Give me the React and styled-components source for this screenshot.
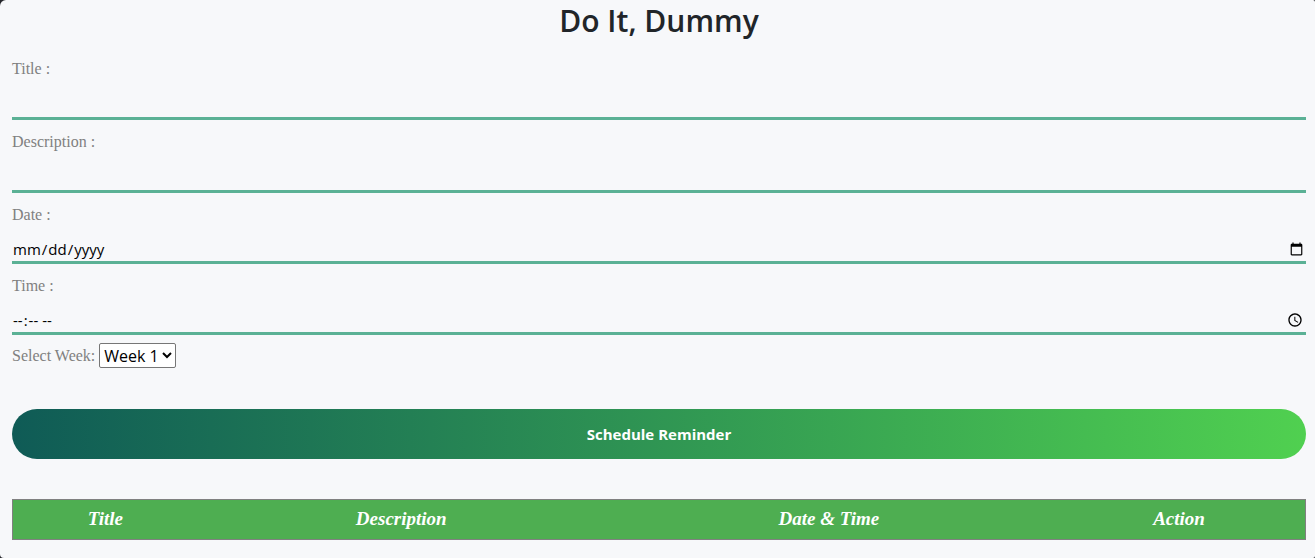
import React from "react";
import styled, { createGlobalStyle } from "styled-components";

const sans = `"Open Sans", "Noto Sans", sans-serif`;
const serif = `"Liberation Serif", "Times New Roman", serif`;

const GlobalStyle = createGlobalStyle`
  *, *::before, *::after { box-sizing: border-box; }
  body {
    margin: 0;
    background: #25262b;
    color: #212529;
    font-family: ${sans};
  }
`;

const Page = styled.main`
  min-height: 100vh;
  padding: 2px 9px 18px 12px;
  background: #f7f8fa;
  border-radius: 6px 2px 2px 4px;
`;

const Heading = styled.h1`
  margin: 0 0 17px;
  font-size: 30px;
  font-weight: 600;
  line-height: 38px;
  text-align: center;
`;

const Form = styled.form`
  display: flex;
  flex-direction: column;
  gap: 10px;
`;

const Field = styled.div`
  display: flex;
  flex-direction: column;
  gap: 8px;
`;

const Label = styled.label`
  color: gray;
  font-family: ${serif};
  font-size: 16px;
  line-height: 24px;
`;

const Input = styled.input`
  width: 100%;
  height: ${(p) => (p.type === "text" ? 31 : 29)}px;
  padding: 2px 0 0;
  border: 0;
  border-bottom: 3px solid #5bb195;
  border-radius: 0;
  outline: 0;
  background: transparent;
  color: #000;
  font-family: ${sans};
  font-size: 15px;
  line-height: 24px;
`;

const WeekRow = styled.div`
  display: flex;
  align-items: center;
  gap: 4px;
  margin-top: -2px;
`;

const Select = styled.select`
  height: 25px;
  padding: 0;
  border: 1px solid #767676;
  border-radius: 2px;
  background: #fff;
  color: #000;
  font-family: ${sans};
  font-size: 16px;
`;

const SubmitButton = styled.button`
  height: 50px;
  margin-top: 31px;
  border: 0;
  border-radius: 25px;
  background: linear-gradient(to right, #0f5b56, #50d050);
  color: #fff;
  font-family: ${sans};
  font-size: 15px;
  font-weight: 700;
  cursor: pointer;
`;

const Table = styled.table`
  width: 100%;
  margin-top: 40px;
  border: 1px solid gray;
  border-spacing: 0;
  table-layout: fixed;
  background: #4eae51;
`;

const HeaderCell = styled.th`
  width: ${(p) => p.$share}%;
  padding: 8px 0 9px;
  color: #fff;
  font-family: ${serif};
  font-size: 19px;
  font-style: italic;
  font-weight: 700;
  line-height: 22px;
  text-align: center;
`;

const fields = [
  { id: "title", label: "Title :", type: "text" },
  { id: "description", label: "Description :", type: "text" },
  { id: "date", label: "Date :", type: "date" },
  { id: "time", label: "Time :", type: "time" },
];

const columns = [
  { name: "Title", share: 14.3 },
  { name: "Description", share: 31.5 },
  { name: "Date & Time", share: 34.7 },
  { name: "Action", share: 19.5 },
];

export default function App() {
  return (
    <>
      <GlobalStyle />
      <Page>
        <Heading>Do It, Dummy</Heading>
        <Form onSubmit={(e) => e.preventDefault()}>
          {fields.map((f) => (
            <Field key={f.id}>
              <Label htmlFor={f.id}>{f.label}</Label>
              <Input id={f.id} name={f.id} type={f.type} />
            </Field>
          ))}
          <WeekRow>
            <Label htmlFor="week">Select Week:</Label>
            <Select id="week" name="week">
              <option>Week 1</option>
              <option>Week 2</option>
              <option>Week 3</option>
              <option>Week 4</option>
            </Select>
          </WeekRow>
          <SubmitButton type="submit">Schedule Reminder</SubmitButton>
        </Form>
        <Table>
          <thead>
            <tr>
              {columns.map((c) => (
                <HeaderCell key={c.name} scope="col" $share={c.share}>
                  {c.name}
                </HeaderCell>
              ))}
            </tr>
          </thead>
        </Table>
      </Page>
    </>
  );
}
